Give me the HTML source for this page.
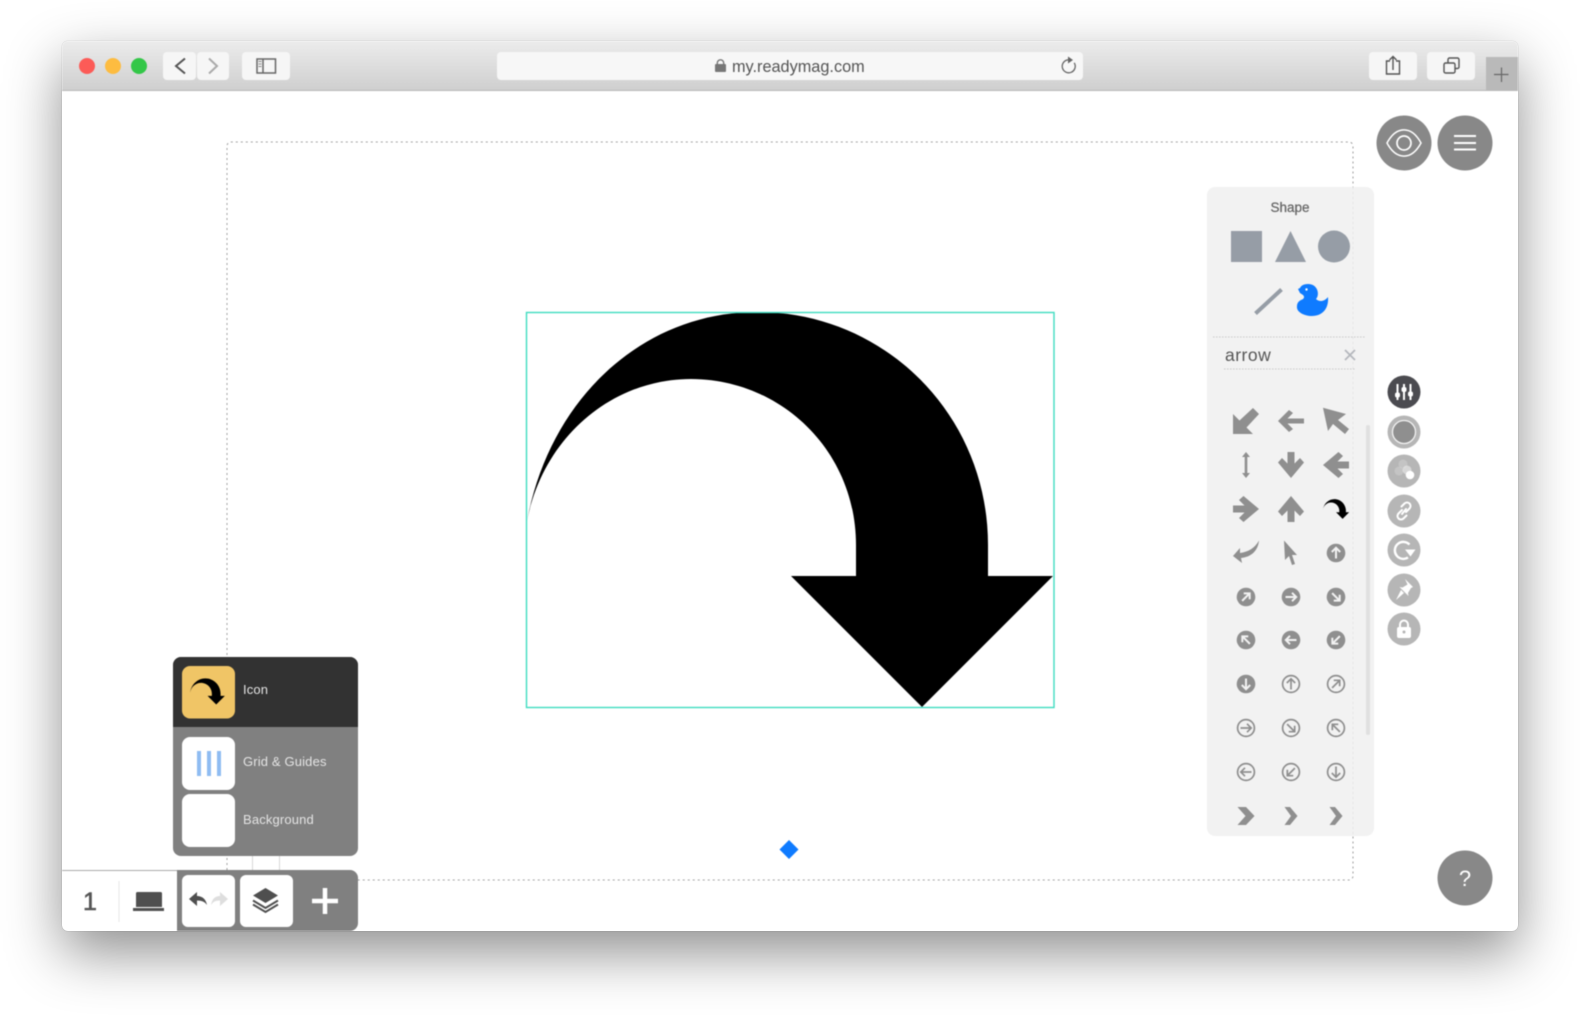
<!DOCTYPE html>
<html>
<head>
<meta charset="utf-8">
<title>my.readymag.com</title>
<style>
html,body{margin:0;padding:0;background:#fff;width:1580px;height:1018px;overflow:hidden}
body{position:relative;font-family:"Liberation Sans",sans-serif}
#win{position:absolute;left:62px;top:41px;width:1456px;height:890px;border-radius:6px;background:#fff;box-shadow:0 22px 56px rgba(0,0,0,.44),0 0 1px rgba(0,0,0,.3)}
svg{position:absolute;left:0;top:0;filter:blur(.55px)}
text{font-family:"Liberation Sans",sans-serif}
</style>
</head>
<body>
<div id="win"></div>
<svg width="1580" height="1018" viewBox="0 0 1580 1018" xmlns="http://www.w3.org/2000/svg">
<defs>
<linearGradient id="tb" x1="0" y1="0" x2="0" y2="1"><stop offset="0" stop-color="#ececec"/><stop offset="1" stop-color="#cfcfcf"/></linearGradient>
<path id="curve" d="M526 527C547 400 642 312 757 312C885 312 988 415 988 545V576H1053L922 707L791 576H856V545C856 450 780 379 691 379C610 379 540 440 526 527Z"/>
<path id="fat" d="M-3.500-13H3.500V-1.500L9-7 13-2.500 0 13-13-2.500-9-7-3.500-1.500Z" fill="#8f8f8f"/>
<g id="cf"><circle r="9.300" fill="#8f8f8f"/><path d="M0 5.500V-5M-4.200-1 0-5.200 4.200-1" fill="none" stroke="#f2f2f2" stroke-width="2"/></g>
<g id="co"><circle r="8.400" fill="none" stroke="#8f8f8f" stroke-width="1.700"/><path d="M0 5.500V-5M-4.200-1 0-5.200 4.200-1" fill="none" stroke="#8f8f8f" stroke-width="1.700"/></g>
</defs>

<!-- toolbar -->
<path d="M62 90V47a6 6 0 0 1 6-6H1512a6 6 0 0 1 6 6V90Z" fill="url(#tb)"/>
<path d="M62 90.500H1518" stroke="#b8b8b8" stroke-width="1"/>
<circle cx="87" cy="66" r="8" fill="#fc5b57"/>
<circle cx="113" cy="66" r="8" fill="#fdbc40"/>
<circle cx="139" cy="66" r="8" fill="#33c748"/>
<rect x="163" y="52" width="33" height="28" rx="4" fill="#f6f6f6"/>
<rect x="197" y="52" width="32" height="28" rx="4" fill="#f6f6f6"/>
<path d="M185 58.500L176 66l9 7.500" fill="none" stroke="#555" stroke-width="2"/>
<path d="M209 58.500L217 66l-8 7.500" fill="none" stroke="#aaa" stroke-width="2"/>
<rect x="242" y="52" width="48" height="28" rx="4" fill="#f6f6f6"/>
<rect x="257" y="59" width="18.500" height="14" fill="none" stroke="#666" stroke-width="1.500"/>
<path d="M263 59V73" stroke="#666" stroke-width="1.500"/>
<path d="M258.500 61.500h3M258.500 64h3M258.500 66.500h3" stroke="#888" stroke-width="1"/>
<rect x="497" y="52" width="586" height="28" rx="4" fill="#f7f7f7"/>
<rect x="715" y="64" width="11" height="8" rx="1" fill="#777"/>
<path d="M717.300 64.500v-1.500a3.200 3.200 0 0 1 6.400 0v1.500" fill="none" stroke="#777" stroke-width="1.400"/>
<text x="732" y="72" font-size="16.300" fill="#555">my.readymag.com</text>
<path d="M1068.500 59.800a6.500 6.500 0 1 0 5.700 3" fill="none" stroke="#666" stroke-width="1.300"/>
<path d="M1068 56.500l5 3.500-5 3.500Z" fill="#666"/>
<rect x="1369" y="52" width="48" height="28" rx="4" fill="#f6f6f6"/>
<path d="M1390 61h-3.500v13h13V61H1396M1393 70V57M1389.500 60l3.500-3.500 3.500 3.500" fill="none" stroke="#555" stroke-width="1.400"/>
<rect x="1427" y="52" width="48" height="28" rx="4" fill="#f6f6f6"/>
<rect x="1444" y="63" width="11" height="10" rx="1.500" fill="none" stroke="#555" stroke-width="1.400"/>
<path d="M1448 63v-3.500a1.500 1.500 0 0 1 1.500-1.500h8a1.500 1.500 0 0 1 1.500 1.500V67a1.500 1.500 0 0 1-1.500 1.500H1455" fill="none" stroke="#555" stroke-width="1.400"/>
<path d="M1486 57H1518V90H1486Z" fill="#b9b9b9"/>
<path d="M1494 74.500h14.500M1501.500 67.500v14.500" stroke="#666" stroke-width="1.200"/>

<!-- dotted frame -->
<path d="M227 870V146a4 4 0 0 1 4-4H1349a4 4 0 0 1 4 4V876a4 4 0 0 1-4 4H358" fill="none" stroke="#a0a0a0" stroke-width="1" stroke-dasharray="2 3"/>
<path d="M252.500 856V870M279.500 856V870" stroke="#d8d8d8" stroke-width="1"/>

<!-- main arrow -->
<use href="#curve" fill="#000"/>
<rect x="526.500" y="312.500" width="527.500" height="395" fill="none" stroke="#3fdcc0" stroke-width="1.400"/>
<path d="M789 840l9.500 9.500-9.500 9.500-9.500-9.500Z" fill="#0f7bff"/>

<!-- top-right buttons -->
<circle cx="1404" cy="143" r="27.500" fill="#888"/>
<circle cx="1465" cy="143" r="27.500" fill="#888"/>
<path d="M1387 143c9.500-17.500 24.500-17.500 34 0c-9.500 17.500-24.500 17.500-34 0Z" fill="none" stroke="#fff" stroke-width="1.500"/>
<circle cx="1404" cy="143" r="7" fill="none" stroke="#fff" stroke-width="1.700"/>
<path d="M1454 136h22M1454 143h22M1454 149.500h22" stroke="#fff" stroke-width="2"/>
<circle cx="1465" cy="878" r="27.500" fill="#888"/>
<text x="1465" y="886" font-size="22" fill="#fff" text-anchor="middle">?</text>

<!-- shape panel -->
<rect x="1207" y="187" width="167" height="649" rx="8" fill="#f2f2f2"/>
<path d="M1353 187V836" stroke="#e4e4e4" stroke-width="1" stroke-dasharray="2 3"/>
<text x="1290" y="212" font-size="13.500" fill="#666" stroke="#666" stroke-width=".25" text-anchor="middle">Shape</text>
<rect x="1231" y="231" width="31" height="31" fill="#969da6"/>
<path d="M1290.500 231L1306 262H1275Z" fill="#969da6"/>
<circle cx="1334" cy="246.500" r="16" fill="#969da6"/>
<path d="M1255.500 313.500L1281.500 289.500" stroke="#969da6" stroke-width="4"/>
<path d="M1297 306C1296 312 1304 316 1312 316C1322 316 1329 309 1328 297C1324 302 1319 302 1316 299C1320 295 1318 284 1308 284C1303 284 1301 286 1300 288L1298 289L1300 293L1303 295C1305 297 1304 299 1301 300C1299 301 1297 303 1297 306Z" fill="#0f7bff"/>
<circle cx="1306.500" cy="289.500" r="1.200" fill="#fff"/>
<path d="M1213 337H1366" stroke="#c8c8c8" stroke-width="1" stroke-dasharray="1.500 1.500"/>
<text x="1225" y="361" font-size="17.500" letter-spacing=".5" fill="#555">arrow</text>
<path d="M1224 369H1356" stroke="#c8c8c8" stroke-width="1" stroke-dasharray="1.500 1.500"/>
<path d="M1345 350l10 10M1355 350l-10 10" stroke="#b5b8bd" stroke-width="1.800"/>
<rect x="1366" y="425" width="4" height="310" rx="2" fill="#e0e0e0"/>

<!-- icon grid -->
<g fill="#8f8f8f">
<g transform="translate(1246,421)"><path d="M-13 13V-7L-6.500-.5 7-13 13-7 .5 6.500 7 13Z"/></g>
<g transform="translate(1291,421)"><path d="M-13 0L-2-11 2-8-3.500-2.500H13V2.500H-3.500L2 8-2 11Z"/></g>
<g transform="translate(1336,421)"><path d="M-13-13.300L10-7 2-1 13 8 9 13-3 3-8 10Z"/></g>
<g transform="translate(1246,465)"><path d="M0-13L4-8H1.300V8H4L0 13-4 8H-1.300V-8H-4Z"/></g>
<use href="#fat" transform="translate(1291,465)"/>
<use href="#fat" transform="translate(1336,465) rotate(90)"/>
<use href="#fat" transform="translate(1246,509) rotate(-90)"/>
<use href="#fat" transform="translate(1291,509) rotate(180)"/>
<g transform="translate(1336,509) scale(.05) translate(-790,-510)"><use href="#curve" fill="#000"/></g>
<g transform="translate(1246,553)"><path d="M13-12.500C12-2 5 4-5 5L-4 10-13 3-6-5-6 0C2-1 9-5 13-12.500Z"/></g>
<g transform="translate(1291,553)"><path d="M-7-12.500L6 2 1 2 4 11 1 12-2 3-6 7Z"/></g>
</g>
<use href="#cf" transform="translate(1336,553)"/>
<use href="#cf" transform="translate(1246,597) rotate(45)"/>
<use href="#cf" transform="translate(1291,597) rotate(90)"/>
<use href="#cf" transform="translate(1336,597) rotate(135)"/>
<use href="#cf" transform="translate(1246,640) rotate(-45)"/>
<use href="#cf" transform="translate(1291,640) rotate(-90)"/>
<use href="#cf" transform="translate(1336,640) rotate(-135)"/>
<use href="#cf" transform="translate(1246,684) rotate(180)"/>
<use href="#co" transform="translate(1291,684)"/>
<use href="#co" transform="translate(1336,684) rotate(45)"/>
<use href="#co" transform="translate(1246,728) rotate(90)"/>
<use href="#co" transform="translate(1291,728) rotate(135)"/>
<use href="#co" transform="translate(1336,728) rotate(-45)"/>
<use href="#co" transform="translate(1246,772) rotate(-90)"/>
<use href="#co" transform="translate(1291,772) rotate(-135)"/>
<use href="#co" transform="translate(1336,772) rotate(180)"/>
<g fill="#8f8f8f">
<path transform="translate(1246,816)" d="M-8.500-9H0L8.500 0 0 9H-8.500L-.5 0Z"/>
<path transform="translate(1291,816)" d="M-6.500-9H-1L6.500 0-1 9H-6.500L0 0Z"/>
<path transform="translate(1336,816)" d="M-6.500-9H-1L6.500 0-1 9H-6.500L0 0Z"/>
</g>

<!-- right tool circles -->
<circle cx="1404" cy="392" r="16.500" fill="#4b4b50"/>
<g stroke="#fff" stroke-width="2"><path d="M1397.500 384V400M1404 384V400M1410.500 384V400"/></g>
<g fill="#fff"><rect x="1395" y="392.500" width="5" height="5" rx="2"/><rect x="1401.500" y="387" width="5" height="5" rx="2"/><rect x="1408" y="391.500" width="5" height="5" rx="2"/></g>
<g fill="#b6b6b6">
<circle cx="1404" cy="432" r="16.500"/><circle cx="1404" cy="471" r="16.500"/><circle cx="1404" cy="511" r="16.500"/><circle cx="1404" cy="550" r="16.500"/><circle cx="1404" cy="590" r="16.500"/><circle cx="1404" cy="629" r="16.500"/>
</g>
<circle cx="1404" cy="432" r="11.500" fill="#8f8f8f" stroke="#f2f2f2" stroke-width="1.300"/>
<circle cx="1403" cy="464" r="4.500" fill="#fff" opacity=".2"/><circle cx="1399" cy="471" r="4.500" fill="#fff" opacity=".2"/><circle cx="1407" cy="470" r="4.500" fill="#fff" opacity=".45"/><circle cx="1410" cy="475" r="4.300" fill="#fff"/>
<g fill="none" stroke="#fff" stroke-width="2" stroke-linecap="round"><path d="M1402 510l-3.500 3.500a3.400 3.400 0 0 0 5 5l3-3"/><path d="M1406 512l3.500-3.500a3.400 3.400 0 0 0-5-5l-3 3"/><path d="M1402 514l4-5"/></g>
<path d="M1408 557.500a8.500 8.500 0 1 1 1.500-13" fill="none" stroke="#fff" stroke-width="2.400"/>
<path d="M1405 549.500h10.500l-5 7Z" fill="#fff"/>
<path d="M1405 579l8 8-2 1-3 5 .500 3-9-9 3 .500 5-3ZM1401 590l3 3-8 7Z" fill="#fff"/>
<rect x="1397" y="627" width="14" height="11" rx="2" fill="#fff"/>
<path d="M1400 627.500v-3a4 4 0 0 1 8 0v3" fill="none" stroke="#fff" stroke-width="2"/>
<circle cx="1404" cy="632" r="1.500" fill="#b6b6b6"/>

<!-- layers panel -->
<rect x="173" y="657" width="185" height="199" rx="8" fill="#808080"/>
<path d="M173 727V665a8 8 0 0 1 8-8H350a8 8 0 0 1 8 8V727Z" fill="#323232"/>
<rect x="182" y="666" width="53" height="52.500" rx="8" fill="#f0c566"/>
<g transform="translate(207.500,691.500) scale(.066) translate(-790,-510)"><use href="#curve" fill="#000"/></g>
<text x="243" y="694" font-size="13" letter-spacing=".15" fill="#e4e4e4">Icon</text>
<rect x="182" y="737" width="53" height="53" rx="8" fill="#fff"/>
<g fill="#8fbcf2"><rect x="197" y="751" width="4" height="25"/><rect x="207" y="751" width="4" height="25"/><rect x="217" y="751" width="4" height="25"/></g>
<text x="243" y="766" font-size="13" letter-spacing=".15" fill="#e4e4e4">Grid &amp; Guides</text>
<rect x="182" y="794" width="53" height="53" rx="8" fill="#fff"/>
<text x="243" y="824" font-size="13" letter-spacing=".15" fill="#e4e4e4">Background</text>

<!-- bottom bar -->
<path d="M62 870.500H177" stroke="#aaa" stroke-width="1"/>
<path d="M177 870H350a8 8 0 0 1 8 8V923a8 8 0 0 1-8 8H177Z" fill="#808080"/>
<text x="90" y="910" font-size="25" fill="#555" stroke="#555" stroke-width=".6" text-anchor="middle">1</text>
<path d="M119 881V922" stroke="#e6e6e6" stroke-width="1"/>
<path d="M136 893.500a1.500 1.500 0 0 1 1.500-1.500h23a1.500 1.500 0 0 1 1.500 1.500V907h-26Z" fill="#4f4f4f"/>
<rect x="133" y="908" width="31" height="3" fill="#4f4f4f"/>
<rect x="182" y="875" width="53" height="52" rx="6" fill="#fff"/>
<path d="M189 899l8-7v4c5 0 9 3 10 9-2-3-5-4.500-10-4.500v5.500Z" fill="#4f4f4f"/>
<path d="M228 899l-8-7v4c-5 0-8 3-9 9 2-3 4-4.500 9-4.500v5.500Z" fill="#dedede"/>
<rect x="240" y="875" width="53" height="52" rx="6" fill="#fff"/>
<path d="M265.500 888L278 895.500 265.500 903 253 895.500Z" fill="#4f4f4f"/>
<path d="M253 900.500l12.500 7.500L278 900.500M253 904.500l12.500 7.500L278 904.500" fill="none" stroke="#4f4f4f" stroke-width="2"/>
<path d="M312 901h26M325 888v26" stroke="#fff" stroke-width="4.500"/>
</svg>
</body>
</html>
